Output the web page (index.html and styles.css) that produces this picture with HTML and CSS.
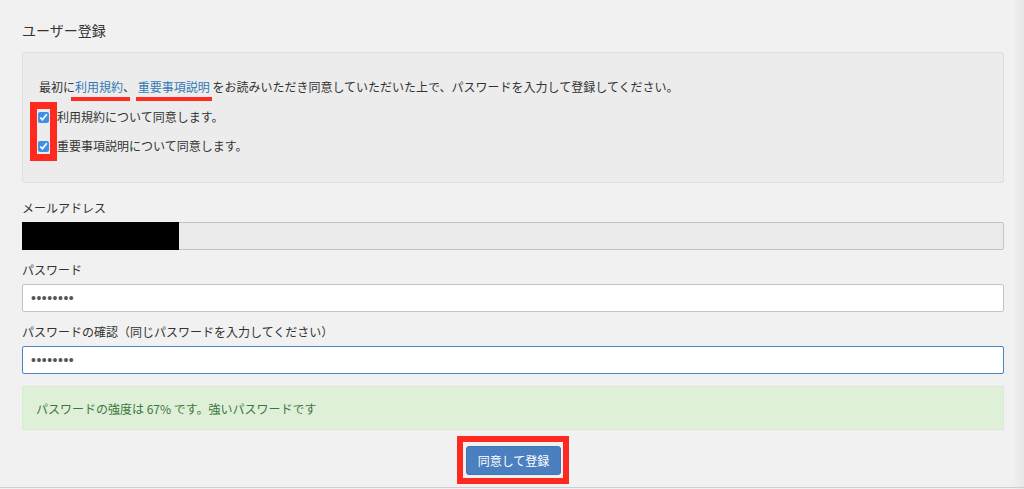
FILE: index.html
```html
<!DOCTYPE html>
<html lang="ja">
<head>
    <meta charset="UTF-8">
    <meta name="viewport" content="width=device-width, initial-scale=1.0">
    <title>ユーザー登録</title>
    <link rel="stylesheet" href="styles.css">
</head>
<body>
    <div class="page">
        <h1>ユーザー登録</h1>

        <div class="panel">
            <p class="lead">最初に<span class="mark mark-first"><a href="#">利用規約</a>、</span> <span class="mark"><a href="#">重要事項説明</a></span> をお読みいただき同意していただいた上で、パスワードを入力して登録してください。</p>
            <div class="checks">
                <span class="check-box-mark"></span>
                <label class="check-row"><input type="checkbox" checked>利用規約について同意します。</label>
                <label class="check-row"><input type="checkbox" checked>重要事項説明について同意します。</label>
            </div>
        </div>

        <div class="form-group">
            <label for="email">メールアドレス</label>
            <div class="field">
                <input type="email" id="email" disabled>
                <span class="redact"></span>
            </div>
        </div>

        <div class="form-group">
            <label for="password">パスワード</label>
            <input type="password" id="password" value="abcdefgh">
        </div>

        <div class="form-group">
            <label for="confirm">パスワードの確認（同じパスワードを入力してください）</label>
            <input type="password" id="confirm" class="focused" value="abcdefgh">
        </div>

        <div class="alert">パスワードの強度は 67% です。強いパスワードです</div>

        <div class="actions">
            <div class="button-mark">
                <button type="submit">同意して登録</button>
            </div>
        </div>
    </div>
</body>
</html>
```

FILE: styles.css
```css
:root {
    --text: #333;
    --link: #337ab7;
    --mark: #ff2a1f;
    --primary: #4a7fc0;
}

html {
    background: linear-gradient(to right, #f1f1f1 calc(100% - 12px), #e7e7e7);
}

body {
    margin: 0;
    height: 489px;
    overflow: hidden;
    font-family: "Noto Sans CJK JP", "Noto Sans", sans-serif;
    font-size: 12px;
    color: var(--text);
}

.page {
    padding: 20px 20px 0 22px;
    height: 467px;
    border-bottom: 1px solid #cfcfcf;
}

h1 {
    margin: 0 0 12px;
    font-size: 14px;
    font-weight: normal;
    line-height: 20px;
}

.panel {
    background-color: #ececec;
    border: 1px solid #dedede;
    border-radius: 3px;
    padding: 24px 16px 26px;
}

.lead {
    margin: 0;
    line-height: 20px;
}

.lead a {
    color: var(--link);
    text-decoration: none;
}

.mark {
    position: relative;
}

.mark::after {
    content: "";
    position: absolute;
    left: -2px;
    right: -2px;
    bottom: -6px;
    height: 4px;
    background-color: var(--mark);
}

.mark-first::after {
    left: -4px;
    right: 5px;
}

.checks {
    position: relative;
    margin-top: 10px;
}

.check-row {
    display: flex;
    align-items: center;
    height: 20px;
    line-height: 20px;
}

.check-row + .check-row {
    margin-top: 9px;
}

.check-row input {
    width: 11px;
    height: 11px;
    margin: 0 8px 0 -1px;
    accent-color: #3d8fe8;
}

.check-box-mark {
    position: absolute;
    left: -9px;
    top: -5px;
    width: 13px;
    height: 45px;
    border: 7px solid var(--mark);
    z-index: 1;
}

.form-group {
    margin-top: 15px;
}

.form-group + .form-group {
    margin-top: 10px;
}

.form-group label {
    display: block;
    line-height: 20px;
    margin-bottom: 4px;
}

.field {
    position: relative;
}

input[type="email"],
input[type="password"] {
    display: block;
    width: 100%;
    height: 28px;
    box-sizing: border-box;
    padding: 0 8px;
    border: 1px solid #c4c4c4;
    border-radius: 2px;
    background-color: #fff;
    font-family: "Liberation Sans", sans-serif;
    font-size: 14px;
    color: #555;
    letter-spacing: 0.5px;
}

input:disabled {
    background-color: #ebebeb;
}

input.focused {
    border-color: #4a82c6;
    outline: none;
}

.redact {
    position: absolute;
    left: 0;
    top: 0;
    width: 157px;
    height: 28px;
    background-color: #000;
}

.alert {
    margin-top: 12px;
    padding: 13px;
    line-height: 18px;
    background-color: #dff0d8;
    border: 1px solid #d8ebd0;
    color: #3c763d;
    box-sizing: border-box;
    height: 44px;
}

.actions {
    display: flex;
    justify-content: center;
    margin-top: 6px;
}

.button-mark {
    border: 6px solid var(--mark);
    padding: 4px 2px 3px 3px;
}

button {
    display: block;
    height: 29px;
    padding: 0 11px;
    background-color: var(--primary);
    border: 1px solid #4274b3;
    border-radius: 3px;
    color: #fff;
    font-family: inherit;
    font-size: 12px;
    cursor: pointer;
}
```
